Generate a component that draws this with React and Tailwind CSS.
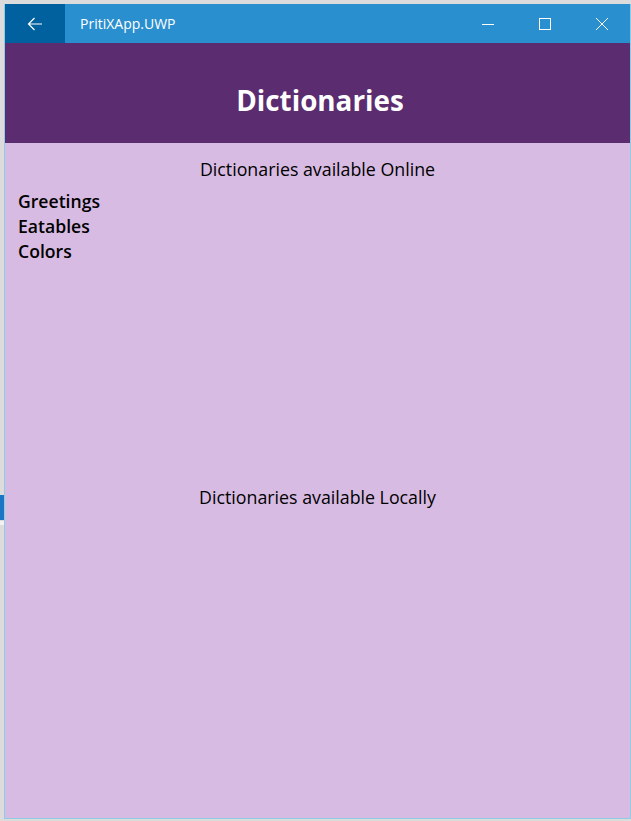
import { useState } from 'react';

// Windows-style UWP window with a dictionaries list page

function BackArrow() {
    return (
        <svg width="16" height="14" viewBox="0 0 16 14" fill="none" stroke="white" strokeWidth="1.2">
            <path d="M15 7H1.5M7.5 1L1.5 7l6 6" />
        </svg>
    );
}

function Minimize() {
    return (
        <svg width="12" height="12" viewBox="0 0 12 12" stroke="white" strokeWidth="1">
            <path d="M0 6.5h12" />
        </svg>
    );
}

function Maximize() {
    return (
        <svg width="12" height="12" viewBox="0 0 12 12" fill="none" stroke="white" strokeWidth="1">
            <rect x="0.5" y="0.5" width="11" height="11" />
        </svg>
    );
}

function Close() {
    return (
        <svg width="12" height="12" viewBox="0 0 12 12" stroke="white" strokeWidth="1">
            <path d="M0 0l12 12M12 0L0 12" />
        </svg>
    );
}

export default function App() {
    const [online] = useState(['Greetings', 'Eatables', 'Colors']);

    return (
        <div
            className="w-[631px] h-[821px] bg-[#dcdcdc] flex overflow-hidden"
            style={{ fontFamily: '"Open Sans", "Noto Sans", sans-serif' }}
        >
            {/* Desktop strip behind the window */}
            <div className="w-[4px] flex flex-col pt-[495px]">
                <div className="h-[25px] bg-[#1b76c4]" />
                <div className="h-[4px] bg-[#f2f2f2] mt-[1px]" />
            </div>

            {/* Window */}
            <div className="flex-1 mt-[4px] mb-[2px] flex flex-col border-l border-r border-b border-[#8fcde6]">
                {/* Title bar */}
                <div className="h-[39px] bg-[#2a8fce] flex items-center text-white">
                    <div className="w-[60px] h-full bg-[#00619e] flex items-center justify-center">
                        <BackArrow />
                    </div>
                    <div className="ml-[15px] text-[14px]">PritiXApp.UWP</div>
                    <div className="ml-auto flex h-full">
                        <div className="w-[57px] flex items-center justify-center"><Minimize /></div>
                        <div className="w-[57px] flex items-center justify-center"><Maximize /></div>
                        <div className="w-[57px] flex items-center justify-center"><Close /></div>
                    </div>
                </div>

                {/* Header */}
                <div className="h-[100px] bg-[#5b2c6f] flex items-center justify-center pt-[16px] pl-[5px]">
                    <h1 className="text-[27.8px] font-bold text-white">Dictionaries</h1>
                </div>

                {/* Content */}
                <div className="flex-1 bg-[#d8bbe2] text-black">
                    <p className="text-center text-[17.8px] mt-[14px] leading-[25px]">Dictionaries available Online</p>
                    <ul className="mt-[7px] pl-[13px] text-[17.6px] font-semibold leading-[25px]">
                        {online.map((name) => (
                            <li key={name}>{name}</li>
                        ))}
                    </ul>
                    <p className="text-center text-[17.8px] mt-[221px] leading-[25px]">Dictionaries available Locally</p>
                </div>
            </div>
        </div>
    );
}
